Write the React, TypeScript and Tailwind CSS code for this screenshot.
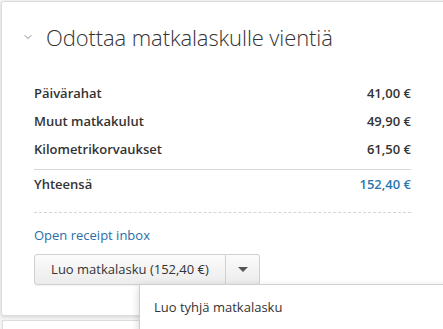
import { ChevronDown } from 'lucide-react'

const rows = [
  { label: 'Päivärahat', value: '41,00 €' },
  { label: 'Muut matkakulut', value: '49,90 €' },
  { label: 'Kilometrikorvaukset', value: '61,50 €' },
]

export default function App() {
  return (
    <div
      className="relative h-[329px] w-[443px] overflow-hidden bg-[#f3f3f3] pl-[1px] pt-[1px] text-[#333]"
      style={{ fontFamily: '"Open Sans", "Noto Sans", sans-serif' }}
    >
      <div className="h-[315px] w-[470px] rounded-[3px] border border-[#dcdcdc] bg-white shadow-[0_1px_3px_rgba(0,0,0,0.12)]">
        <div className="flex h-[70px] items-center pl-[20px]">
          <ChevronDown size={12} strokeWidth={1.5} className="text-[#666]" />
          <h2 className="ml-[12px] text-[22px] font-light leading-none tracking-[-0.1px] text-[#333]">
            Odottaa matkalaskulle vientiä
          </h2>
        </div>

        <div className="w-[409px] pl-[32px] pt-[8px]">
          {rows.map((row) => (
            <div
              key={row.label}
              className="flex h-[28px] items-center justify-between text-[13px] font-semibold"
            >
              <span>{row.label}</span>
              <span>{row.value}</span>
            </div>
          ))}
          <div className="mt-[5px] border-t border-[#d8d8d8]" />
          <div className="flex h-[30px] items-center justify-between text-[13px] font-semibold">
            <span>Yhteensä</span>
            <span className="text-[#2a78b0]">152,40 €</span>
          </div>
          <div className="mt-[12px] border-t border-dashed border-[#d6d6d6]" />
          <a className="mt-[13px] block text-[13px] leading-[18px] text-[#2a6ea6]">
            Open receipt inbox
          </a>
          <div className="mt-[10px] flex h-[31px] w-[226px] rounded-[3px] border border-[#d0d0d0] bg-gradient-to-b from-[#fbfbfb] to-[#ececec] text-[13px] shadow-[0_1px_1px_rgba(0,0,0,0.05)]">
            <button className="flex flex-1 items-center justify-center border-r border-[#d0d0d0] text-[#333]">
              Luo matkalasku (152,40 €)
            </button>
            <button className="flex w-[33px] items-center justify-center">
              <span className="h-0 w-0 border-x-[5px] border-t-[5px] border-x-transparent border-t-[#555]" />
            </button>
          </div>
        </div>
      </div>

      <div className="mt-[4px] ml-[1px] h-[20px] w-[470px] border border-[#dcdcdc] bg-white" />

      <div className="absolute left-[139px] top-[284px] h-[60px] w-[320px] border border-[#cfcfcf] bg-white shadow-[0_3px_8px_rgba(0,0,0,0.18)]">
        <div className="pl-[14px] pt-[13px] text-[13px] leading-[18px] text-[#333]">
          Luo tyhjä matkalasku
        </div>
      </div>
    </div>
  )
}
